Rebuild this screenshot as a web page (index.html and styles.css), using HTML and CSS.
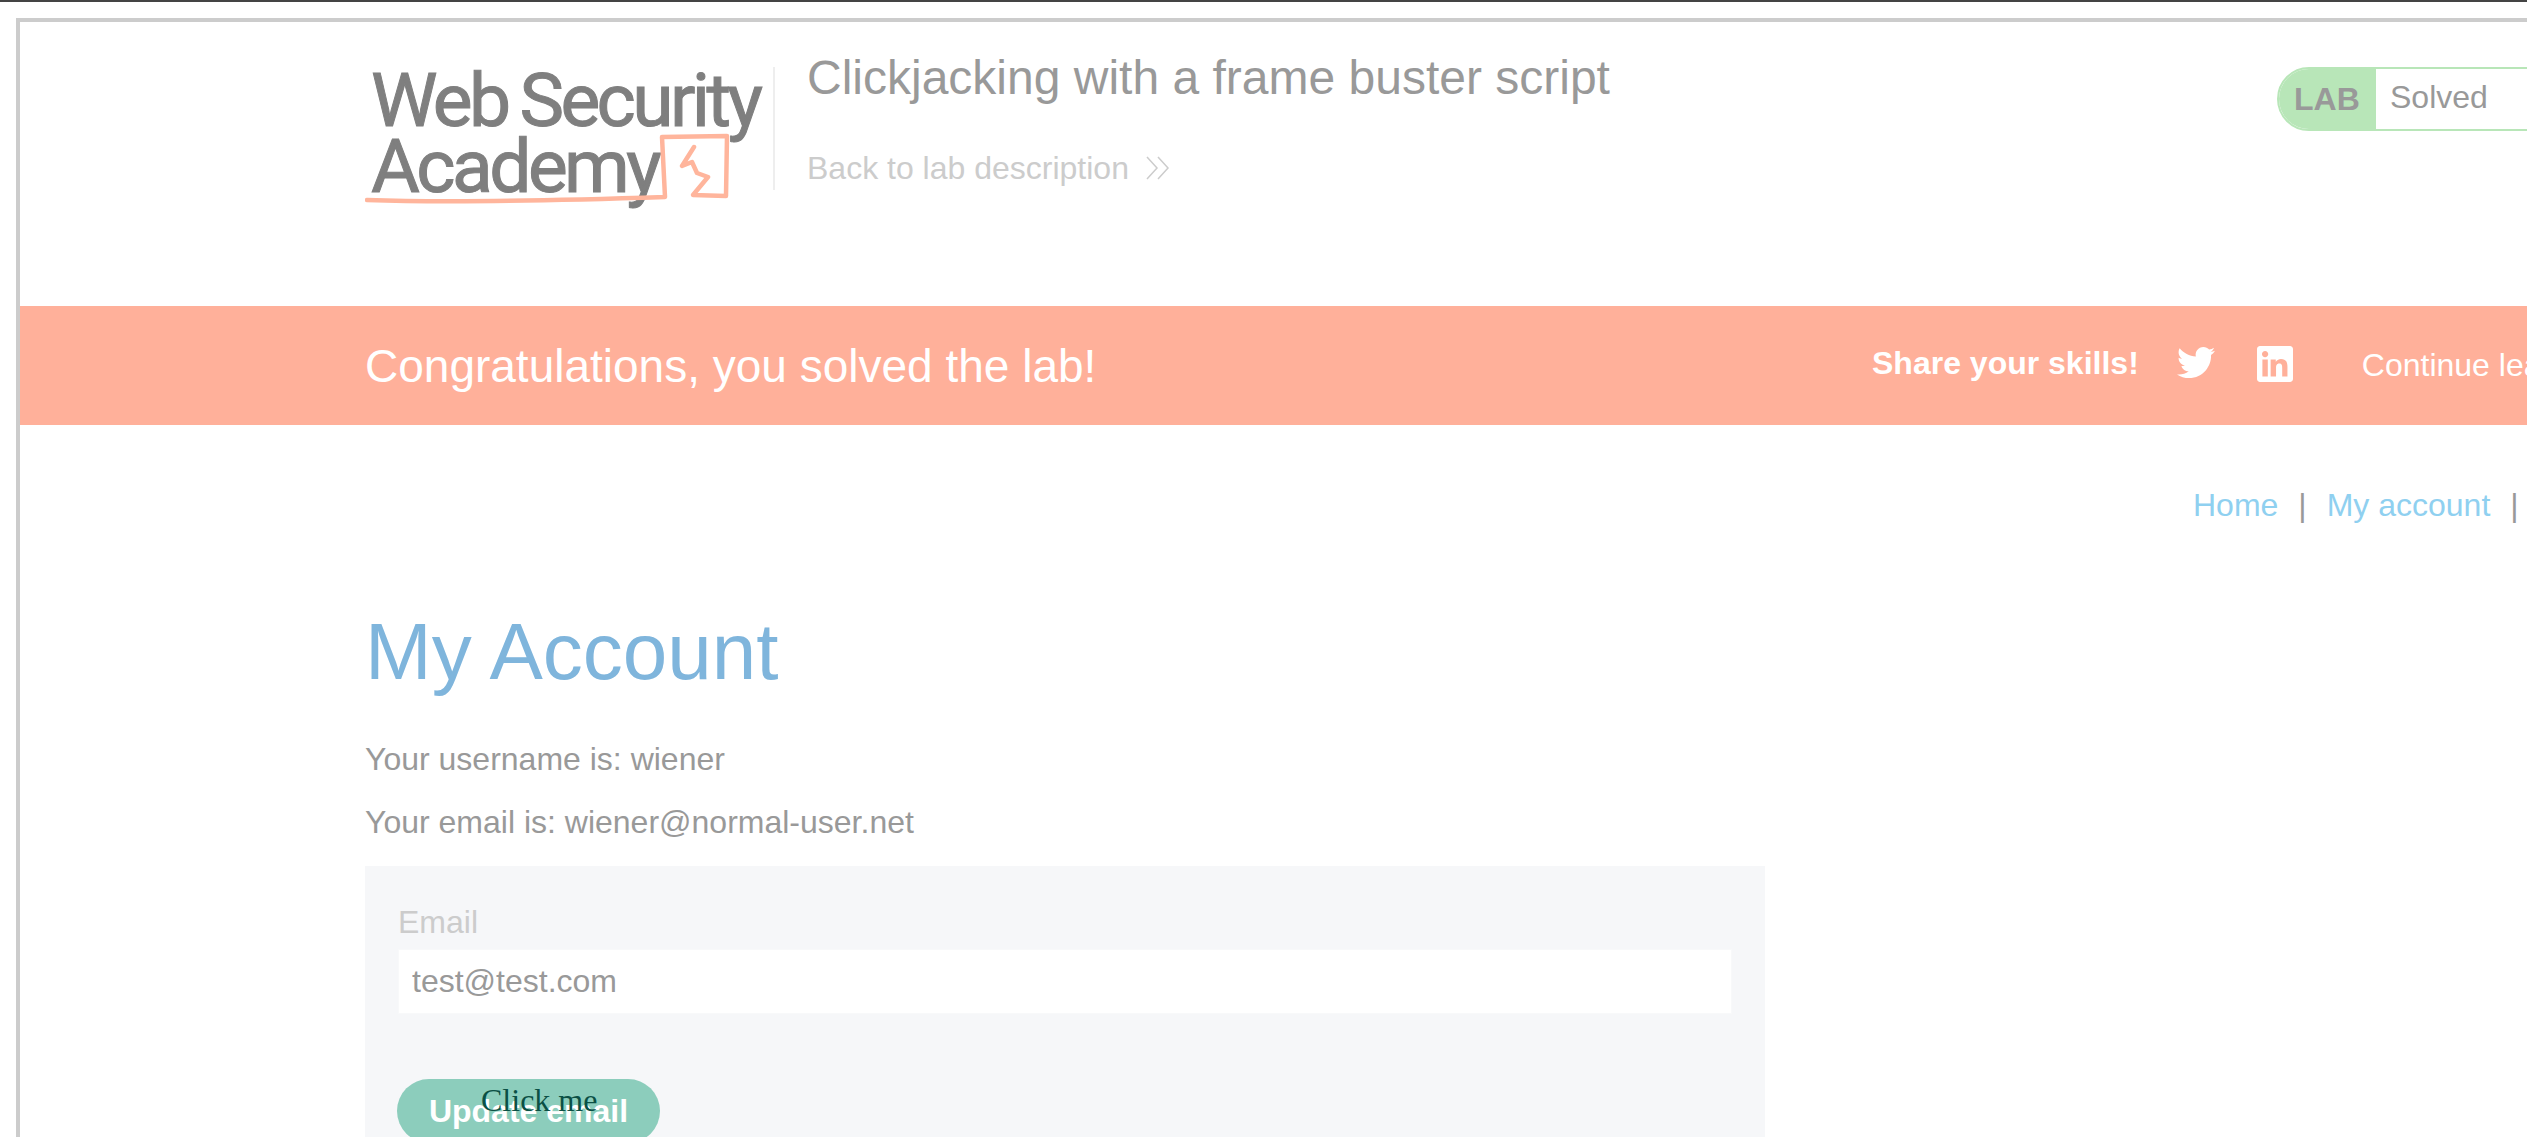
FILE: index.html
```html
<!DOCTYPE html>
<html lang="en">
<head>
    <meta charset="UTF-8">
    <title>Clickjacking with a frame buster script</title>
    <link rel="stylesheet" href="styles.css">
</head>
<body>
    <div class="topline"></div>
    <div class="frame">
        <header class="lab-header">
            <div class="logo">
                <div class="logo-line">Web Security</div>
                <div class="logo-line">Academy</div>
                <svg class="logo-mark" width="380" height="90" viewBox="0 0 380 90" fill="none" stroke="#ffb59c" stroke-linecap="round" stroke-linejoin="round">
                    <path d="M2 68 C90 71 210 68 300 65 L297 5 L362 4 L361 64 L328 63 L343 45 L332 41 L327 30 L317 34 L329 15" stroke-width="4.500"/>
                </svg>
            </div>
            <div class="lab-title">
                <h2>Clickjacking with a frame buster script</h2>
                <a class="back-link" href="#">Back to lab description
                    <svg width="24" height="24" viewBox="0 0 24 24" fill="none" stroke="#ccc" stroke-width="1.5"><path d="M1 1 L11 12 L1 23 M12 1 L22 12 L12 23"/></svg>
                </a>
            </div>
            <div class="lab-status">
                <span class="lab-tag">LAB</span>
                <span class="lab-state">Solved</span>
            </div>
        </header>
        <section class="banner">
            <h4>Congratulations, you solved the lab!</h4>
            <div class="share">
                <span class="share-label">Share your skills!</span>
                <svg class="twitter" width="38" height="35" viewBox="0 0 24 22" fill="#fff"><path d="M24 2.9c-.9.4-1.8.7-2.8.8 1-.6 1.8-1.6 2.2-2.7-1 .6-2 1-3.100 1.200C19.400 1.200 18.100.6 16.700.6c-3.200 0-5.500 2.900-4.800 6C7.800 6.400 4.100 4.400 1.700 1.400.4 3.600 1 6.500 3.200 8c-.8 0-1.600-.2-2.200-.6-.1 2.300 1.600 4.500 4 5-.7.2-1.500.2-2.200.1.600 2 2.500 3.400 4.600 3.400C5.300 17.500 2.700 18.200 0 17.900c2.200 1.400 4.900 2.300 7.500 2.300 9.100 0 14.300-7.700 14-14.600 1-.7 1.800-1.600 2.500-2.700z"/></svg>
                <svg class="linkedin" width="36" height="36" viewBox="0 0 24 24" fill="#fff"><path d="M22 0H2C.9 0 0 .9 0 2v20c0 1.100.9 2 2 2h20c1.100 0 2-.9 2-2V2c0-1.100-.9-2-2-2zM7.200 20.300H3.600V9h3.600v11.300zM5.400 7.500c-1.200 0-2.100-.9-2.100-2.100s.9-2.100 2.100-2.100 2.100.9 2.100 2.100-.9 2.100-2.100 2.100zm15 12.800h-3.600v-5.500c0-1.400 0-3.100-1.900-3.100s-2.200 1.500-2.200 3v5.600h-3.600V9h3.400v1.500h.1c.5-.9 1.700-1.900 3.400-1.900 3.600 0 4.300 2.400 4.300 5.400v6.300z"/></svg>
                <a class="continue" href="#">Continue learning</a>
            </div>
        </section>
        <section class="maincontainer">
            <nav class="top-links">
                <a href="#">Home</a><span class="sep">|</span><a href="#">My account</a><span class="sep">|</span><a href="#">Log out</a>
            </nav>
            <h1>My Account</h1>
            <p>Your username is: wiener</p>
            <p>Your email is: wiener@normal-user.net</p>
            <form class="email-form">
                <label for="email">Email</label>
                <input id="email" type="text" value="test@test.com">
                <button type="button">Update email</button>
            </form>
        </section>
    </div>
    <div class="decoy">Click me</div>
</body>
</html>
```

FILE: styles.css
```css
html, body {
    margin: 0;
    padding: 0;
    height: 1137px;
    overflow: hidden;
    background: #fff;
}
.topline {
    height: 2px;
    background: #444;
}
.frame {
    width: 3000px;
    height: 1300px;
    margin: 16px 0 0 16px;
    border: 4px solid #ccc;
    font-family: "Liberation Sans", Arial, sans-serif;
    color: #999;
    font-size: 32px;
}
.lab-header {
    display: flex;
    height: 284px;
    box-sizing: border-box;
    padding: 45px 0 0 351px;
}
.logo {
    position: relative;
    width: 402px;
    height: 123px;
    border-right: 2px solid #eee;
    font-family: Roboto, sans-serif;
    font-size: 75px;
    line-height: 66px;
    letter-spacing: -3.6px;
    word-spacing: -3px;
    -webkit-text-stroke: 1px #7f7f7f;
    color: #7f7f7f;
}
.logo-line {
    white-space: nowrap;
}
.logo-mark {
    position: absolute;
    left: -6px;
    top: 65px;
}
.lab-title {
    margin-left: 32px;
    width: 1470px;
}
.lab-title h2 {
    margin: -19px 0 0;
    font-size: 48px;
    font-weight: normal;
    line-height: 60px;
    color: #999;
}
.back-link {
    display: flex;
    align-items: center;
    gap: 17px;
    margin-top: 40px;
    color: #ccc;
    text-decoration: none;
    line-height: 40px;
}
.lab-status {
    display: flex;
    width: 400px;
    height: 64px;
    margin-top: 0;
    box-sizing: border-box;
    border: 2px solid #b8e6b8;
    border-radius: 32px 0 0 32px;
}
.lab-tag {
    display: flex;
    align-items: center;
    width: 97px;
    box-sizing: border-box;
    padding-left: 15px;
    background: #b8e6b8;
    font-weight: bold;
    border-radius: 30px 0 0 30px;
}
.lab-state {
    padding-left: 14px;
    line-height: 57px;
}
.banner {
    display: flex;
    justify-content: space-between;
    align-items: center;
    box-sizing: border-box;
    height: 119px;
    padding-left: 345px;
    background: #ffb09a;
    color: #fff;
}
.banner h4 {
    margin: 0;
    font-size: 46px;
    font-weight: normal;
}
.share {
    display: flex;
    align-items: center;
    width: 1148px;
}
.share-label {
    font-weight: bold;
    margin-top: -4px;
}
.twitter {
    margin: -4px 0 0 38px;
}
.linkedin {
    margin: -4px 0 0 42px;
}
.continue {
    margin-left: 69px;
    color: #fff;
    text-decoration: none;
    white-space: nowrap;
}
.maincontainer {
    padding: 60px 0 0 345px;
}
.top-links {
    padding-left: 1828px;
    line-height: 40px;
    white-space: nowrap;
}
.top-links a {
    color: #8fd0f0;
    text-decoration: none;
}
.sep {
    margin: 0 20px;
    color: #999;
}
h1 {
    margin: 81px 0 0;
    font-size: 80px;
    font-weight: normal;
    line-height: 92px;
    color: #7fb5dc;
}
.maincontainer p {
    margin: 0;
    line-height: 63px;
}
.maincontainer h1 + p {
    margin-top: 30px;
}
.email-form {
    display: flex;
    flex-direction: column;
    align-items: flex-start;
    width: 1400px;
    height: 400px;
    margin-top: 12px;
    box-sizing: border-box;
    padding: 37px 33px;
    background: #f6f7f9;
}
.email-form label {
    color: #ccc;
    line-height: 38px;
}
.email-form input {
    width: 1334px;
    height: 65px;
    margin-top: 8px;
    box-sizing: border-box;
    padding: 0 13px;
    border: 1px solid #f8f9fa;
    background: #fff;
    color: #999;
    font: 32px "Liberation Sans", Arial, sans-serif;
}
.email-form button {
    width: 263px;
    height: 64px;
    margin-top: 65px;
    margin-left: -1px;
    padding: 0;
    border: 0;
    border-radius: 32px;
    background: #8ccdbc;
    color: #fff;
    font: bold 32px "Liberation Sans", Arial, sans-serif;
}
.decoy {
    position: absolute;
    left: 481px;
    top: 1082px;
    font-family: "Liberation Serif", "Times New Roman", serif;
    font-size: 32px;
    line-height: 36px;
    color: #0b5045;
}
```
